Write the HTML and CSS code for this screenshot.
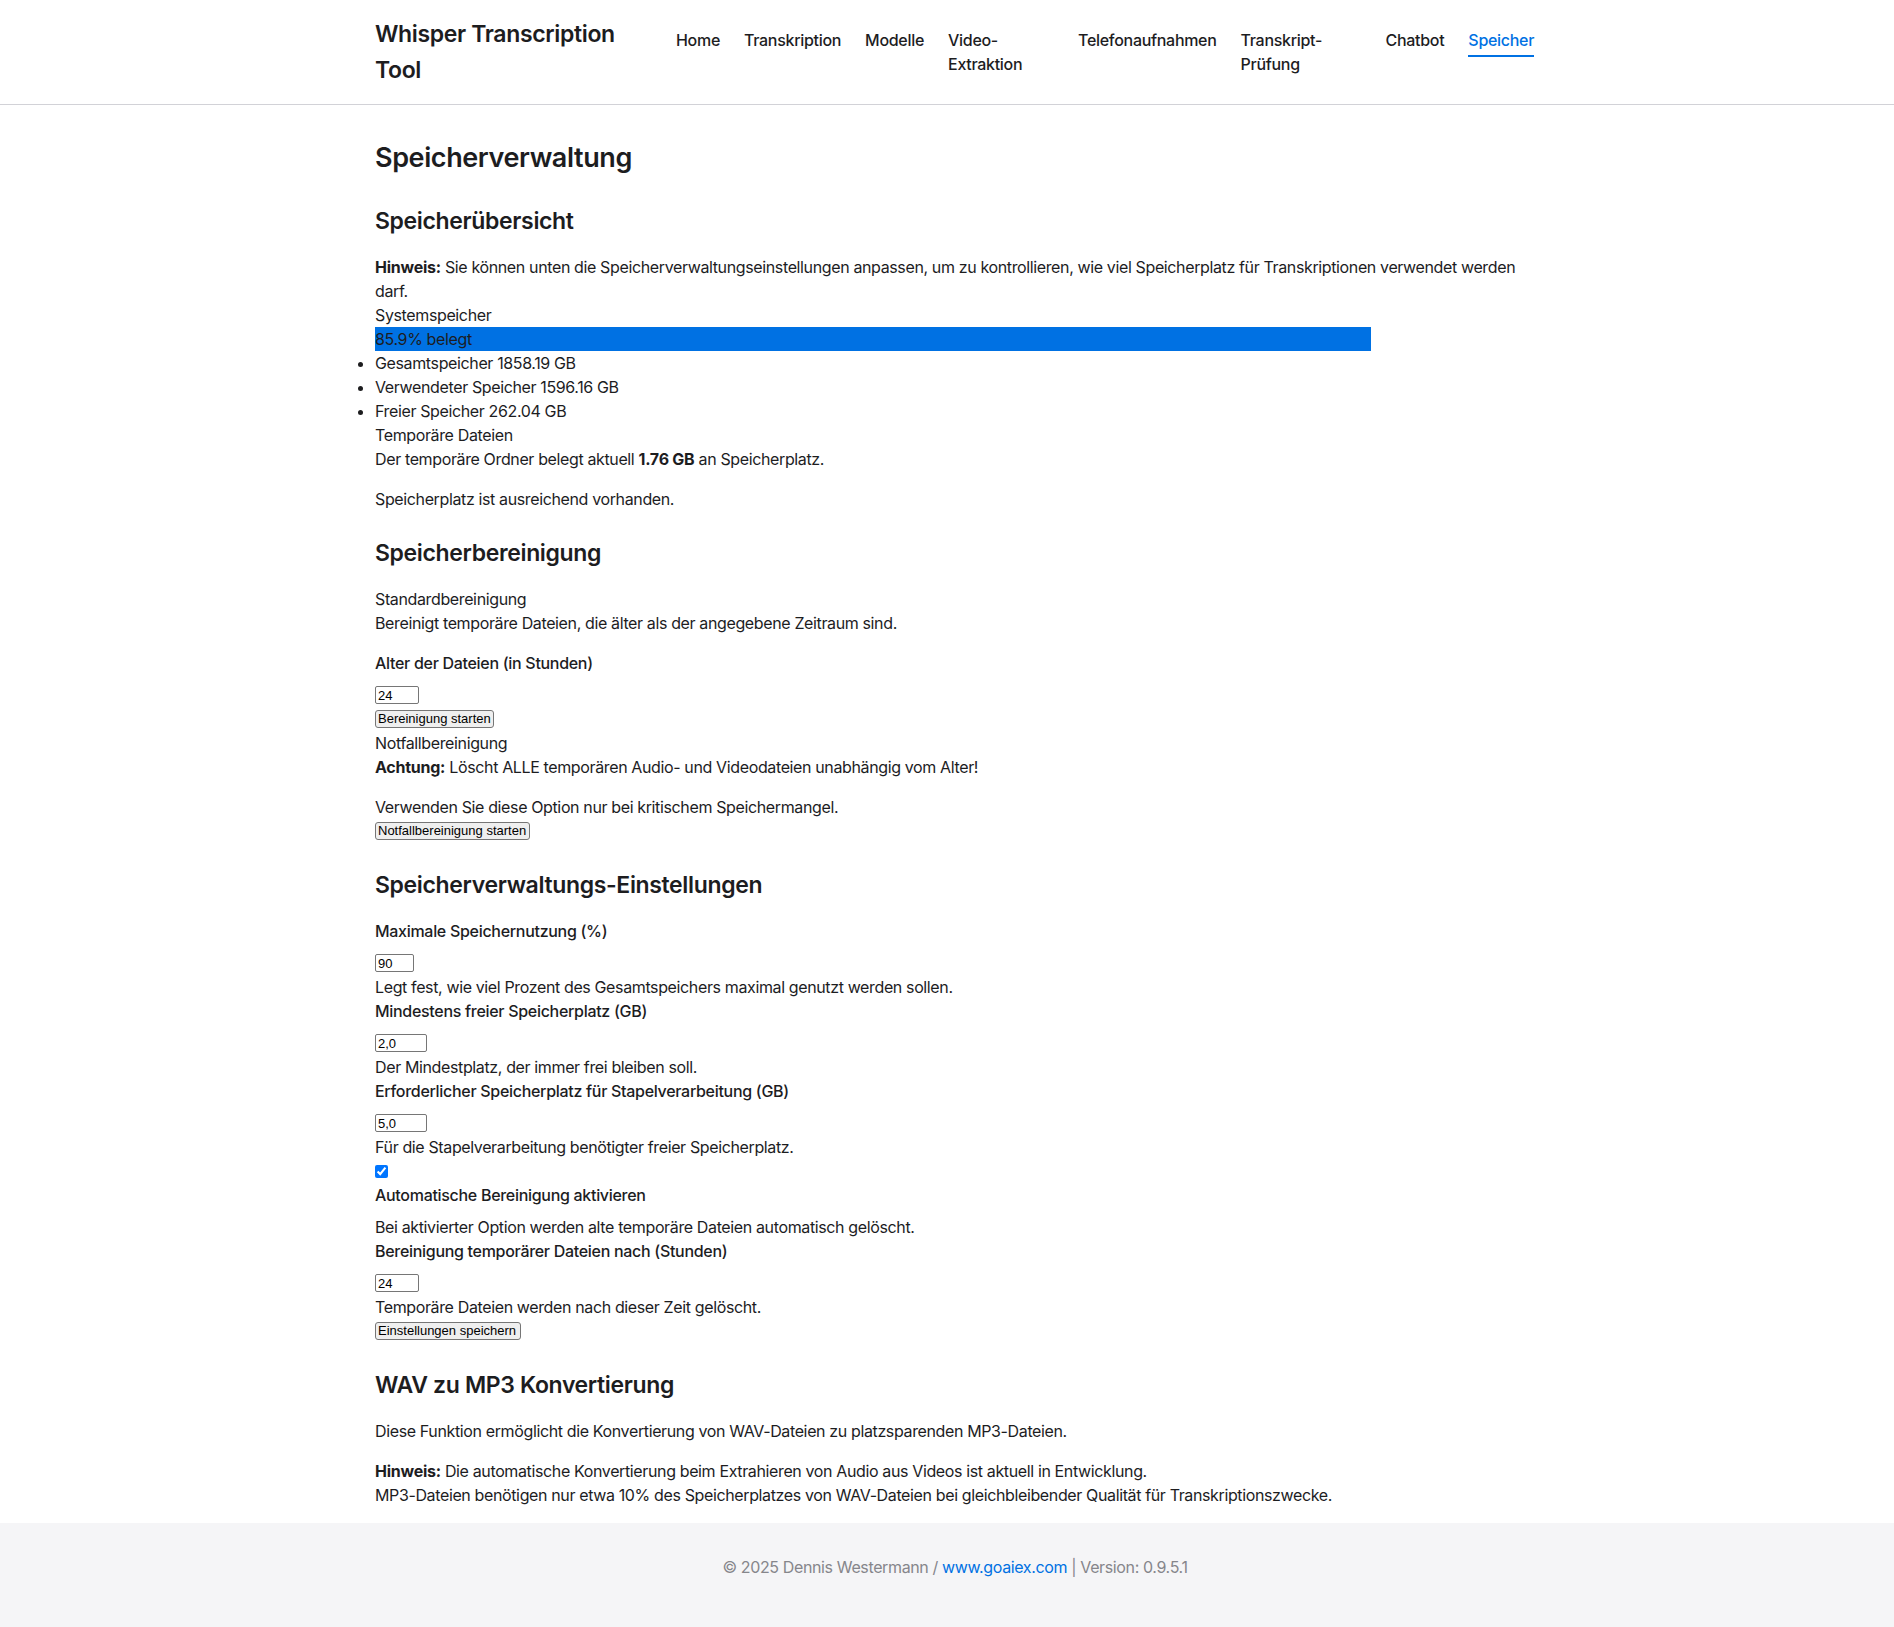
FILE: index.html
```html
<!DOCTYPE html>
<html lang="de">
<head>
<meta charset="utf-8">
<title>Speicherverwaltung – Whisper Transcription Tool</title>
<link rel="stylesheet" href="styles.css">
</head>
<body>
<header class="site-header">
  <div class="container header-inner">
    <a class="brand" href="#">Whisper Transcription Tool</a>
    <nav class="main-nav">
      <ul class="nav-list">
        <li class="nav-item"><a href="#">Home</a></li>
        <li class="nav-item"><a href="#">Transkription</a></li>
        <li class="nav-item"><a href="#">Modelle</a></li>
        <li class="nav-item nav-video"><a href="#">Video-Extraktion</a></li>
        <li class="nav-item"><a href="#">Telefonaufnahmen</a></li>
        <li class="nav-item nav-check"><a href="#">Transkript-Prüfung</a></li>
        <li class="nav-item"><a href="#">Chatbot</a></li>
        <li class="nav-item"><a class="active" href="#">Speicher</a></li>
      </ul>
    </nav>
  </div>
</header>

<main class="container main">
  <h1 class="page-title">Speicherverwaltung</h1>

  <section class="section">
    <h2 class="section-title">Speicherübersicht</h2>
    <p class="flush"><strong>Hinweis:</strong> Sie können unten die Speicherverwaltungseinstellungen anpassen, um zu kontrollieren, wie viel Speicherplatz für Transkriptionen verwendet werden darf.</p>
    <div class="card-title">Systemspeicher</div>
    <div class="progress"><div class="progress-bar" style="width: 85.9%">85.9% belegt</div></div>
    <ul class="stats">
      <li>Gesamtspeicher 1858.19 GB</li>
      <li>Verwendeter Speicher 1596.16 GB</li>
      <li>Freier Speicher 262.04 GB</li>
    </ul>
    <div class="card-title">Temporäre Dateien</div>
    <p>Der temporäre Ordner belegt aktuell <strong>1.76 GB</strong> an Speicherplatz.</p>
    <p>Speicherplatz ist ausreichend vorhanden.</p>
  </section>

  <section class="section">
    <h2 class="section-title">Speicherbereinigung</h2>
    <div class="card-title">Standardbereinigung</div>
    <p>Bereinigt temporäre Dateien, die älter als der angegebene Zeitraum sind.</p>
    <label class="field-label" for="age">Alter der Dateien (in Stunden)</label>
    <div class="field-row"><input class="num num-24" id="age" type="text" value="24"></div>
    <div class="field-row"><button class="btn btn-w1" type="button">Bereinigung starten</button></div>
    <div class="card-title">Notfallbereinigung</div>
    <p><strong>Achtung:</strong> Löscht ALLE temporären Audio- und Videodateien unabhängig vom Alter!</p>
    <p class="flush">Verwenden Sie diese Option nur bei kritischem Speichermangel.</p>
    <div class="field-row"><button class="btn btn-w2" type="button">Notfallbereinigung starten</button></div>
  </section>

  <section class="section">
    <h2 class="section-title">Speicherverwaltungs-Einstellungen</h2>
    <label class="field-label" for="maxuse">Maximale Speichernutzung (%)</label>
    <div class="field-row"><input class="num num-90" id="maxuse" type="text" value="90"></div>
    <div class="help">Legt fest, wie viel Prozent des Gesamtspeichers maximal genutzt werden sollen.</div>
    <label class="field-label" for="minfree">Mindestens freier Speicherplatz (GB)</label>
    <div class="field-row"><input class="num num-dec" id="minfree" type="text" value="2,0"></div>
    <div class="help">Der Mindestplatz, der immer frei bleiben soll.</div>
    <label class="field-label" for="batch">Erforderlicher Speicherplatz für Stapelverarbeitung (GB)</label>
    <div class="field-row"><input class="num num-dec" id="batch" type="text" value="5,0"></div>
    <div class="help">Für die Stapelverarbeitung benötigter freier Speicherplatz.</div>
    <div class="field-row"><input class="check" id="auto" type="checkbox" checked></div>
    <label class="field-label" for="auto">Automatische Bereinigung aktivieren</label>
    <div class="help">Bei aktivierter Option werden alte temporäre Dateien automatisch gelöscht.</div>
    <label class="field-label" for="after">Bereinigung temporärer Dateien nach (Stunden)</label>
    <div class="field-row"><input class="num num-24" id="after" type="text" value="24"></div>
    <div class="help">Temporäre Dateien werden nach dieser Zeit gelöscht.</div>
    <div class="field-row"><button class="btn btn-w3" type="button">Einstellungen speichern</button></div>
  </section>

  <section class="section">
    <h2 class="section-title">WAV zu MP3 Konvertierung</h2>
    <p>Diese Funktion ermöglicht die Konvertierung von WAV-Dateien zu platzsparenden MP3-Dateien.</p>
    <p><strong>Hinweis:</strong> Die automatische Konvertierung beim Extrahieren von Audio aus Videos ist aktuell in Entwicklung.<br>MP3-Dateien benötigen nur etwa 10% des Speicherplatzes von WAV-Dateien bei gleichbleibender Qualität für Transkriptionszwecke.</p>
  </section>
</main>

<footer class="site-footer">
  <div class="container footer-inner">
    © 2025 Dennis Westermann / <a href="#">www.goaiex.com</a> | Version: 0.9.5.1
  </div>
</footer>
</body>
</html>
```

FILE: styles.css
```css
* { box-sizing: border-box; }

html, body {
  margin: 0;
  padding: 0;
}

body {
  font-family: Inter, "Noto Sans", "Liberation Sans", sans-serif;
  font-size: 16px;
  line-height: 24px;
  color: #1d1d1f;
  background: #ffffff;
  letter-spacing: -0.37px;
}

strong {
  display: inline-block;
  letter-spacing: -0.25px;
}

a { color: inherit; text-decoration: none; }

.container {
  width: 1176px;
  margin: 0 auto;
  padding-left: 16px;
}

/* Header */
.site-header {
  border-bottom: 1px solid #d2d2d7;
  background: #ffffff;
}

.header-inner {
  display: flex;
  align-items: center;
  padding-top: 16px;
  padding-bottom: 16px;
}

.brand {
  width: 250px;
  flex: none;
  font-size: 23px;
  line-height: 36px;
  font-weight: 600;
  letter-spacing: -0.35px;
  color: #1d1d1f;
  margin-right: 51px;
}

.main-nav { flex: 1; }

.nav-list {
  list-style: none;
  margin: 0;
  padding: 0;
  display: flex;
  align-items: flex-start;
  gap: 24px;
  font-size: 16px;
  font-weight: 500;
  letter-spacing: -0.3px;
}

.nav-item a {
  display: block;
  color: #1d1d1f;
}

.nav-video { width: 106px; }
.nav-check { width: 121px; }

.nav-item a.active {
  color: #0071e3;
  padding-bottom: 3px;
  border-bottom: 2px solid #0071e3;
}

/* Main */
.main {
  padding-top: 36px;
  padding-bottom: 0;
}

.page-title {
  font-size: 27px;
  line-height: 34px;
  font-weight: 600;
  margin: 0 0 32px;
  letter-spacing: -0.4px;
}

.section-title {
  font-size: 23px;
  line-height: 28px;
  font-weight: 600;
  margin: 28px 0 20px;
  letter-spacing: -0.35px;
}

.section:first-of-type .section-title { margin-top: 0; }

p { margin: 0 0 16px; }
p.flush { margin-bottom: 0; }

.progress {
  width: 100%;
  height: 24px;
}

.progress-bar {
  height: 24px;
  background: #0071e3;
  color: #1d1d1f;
  white-space: nowrap;
}

.stats {
  margin: 0;
  padding: 0;
  list-style: disc outside;
}

.field-label {
  display: block;
  font-weight: 500;
  margin-bottom: 8px;
  letter-spacing: -0.3px;
}

.field-row {
  height: 24px;
  display: flex;
  align-items: center;
}

.num {
  font-family: "Liberation Sans", Arial, sans-serif;
  font-size: 13px;
  letter-spacing: 0;
  height: 18px;
  padding: 0 2px;
  border: 1px solid #767676;
  border-radius: 2px;
  color: #000;
  background: #fff;
}

.num-24 { width: 44px; }
.num-90 { width: 39px; }
.num-dec { width: 52px; }

.check {
  width: 13px;
  height: 13px;
  margin: 0;
  accent-color: #0075ff;
}

.btn {
  font-family: "Liberation Sans", Arial, sans-serif;
  font-size: 13px;
  letter-spacing: 0;
  height: 18px;
  line-height: 14px;
  padding: 0 2px;
  border: 1px solid #767676;
  border-radius: 3px;
  background: #efefef;
  color: #000;
  text-align: left;
}

.btn-w1 { width: 119px; }
.btn-w2 { width: 155px; }
.btn-w3 { width: 146px; }

/* Footer */
.site-footer {
  background: #f5f5f7;
  padding: 32px 0 48px;
}

.footer-inner {
  text-align: center;
  color: #86868b;
  font-size: 16px;
}

.footer-inner a { color: #0071e3; }
```
